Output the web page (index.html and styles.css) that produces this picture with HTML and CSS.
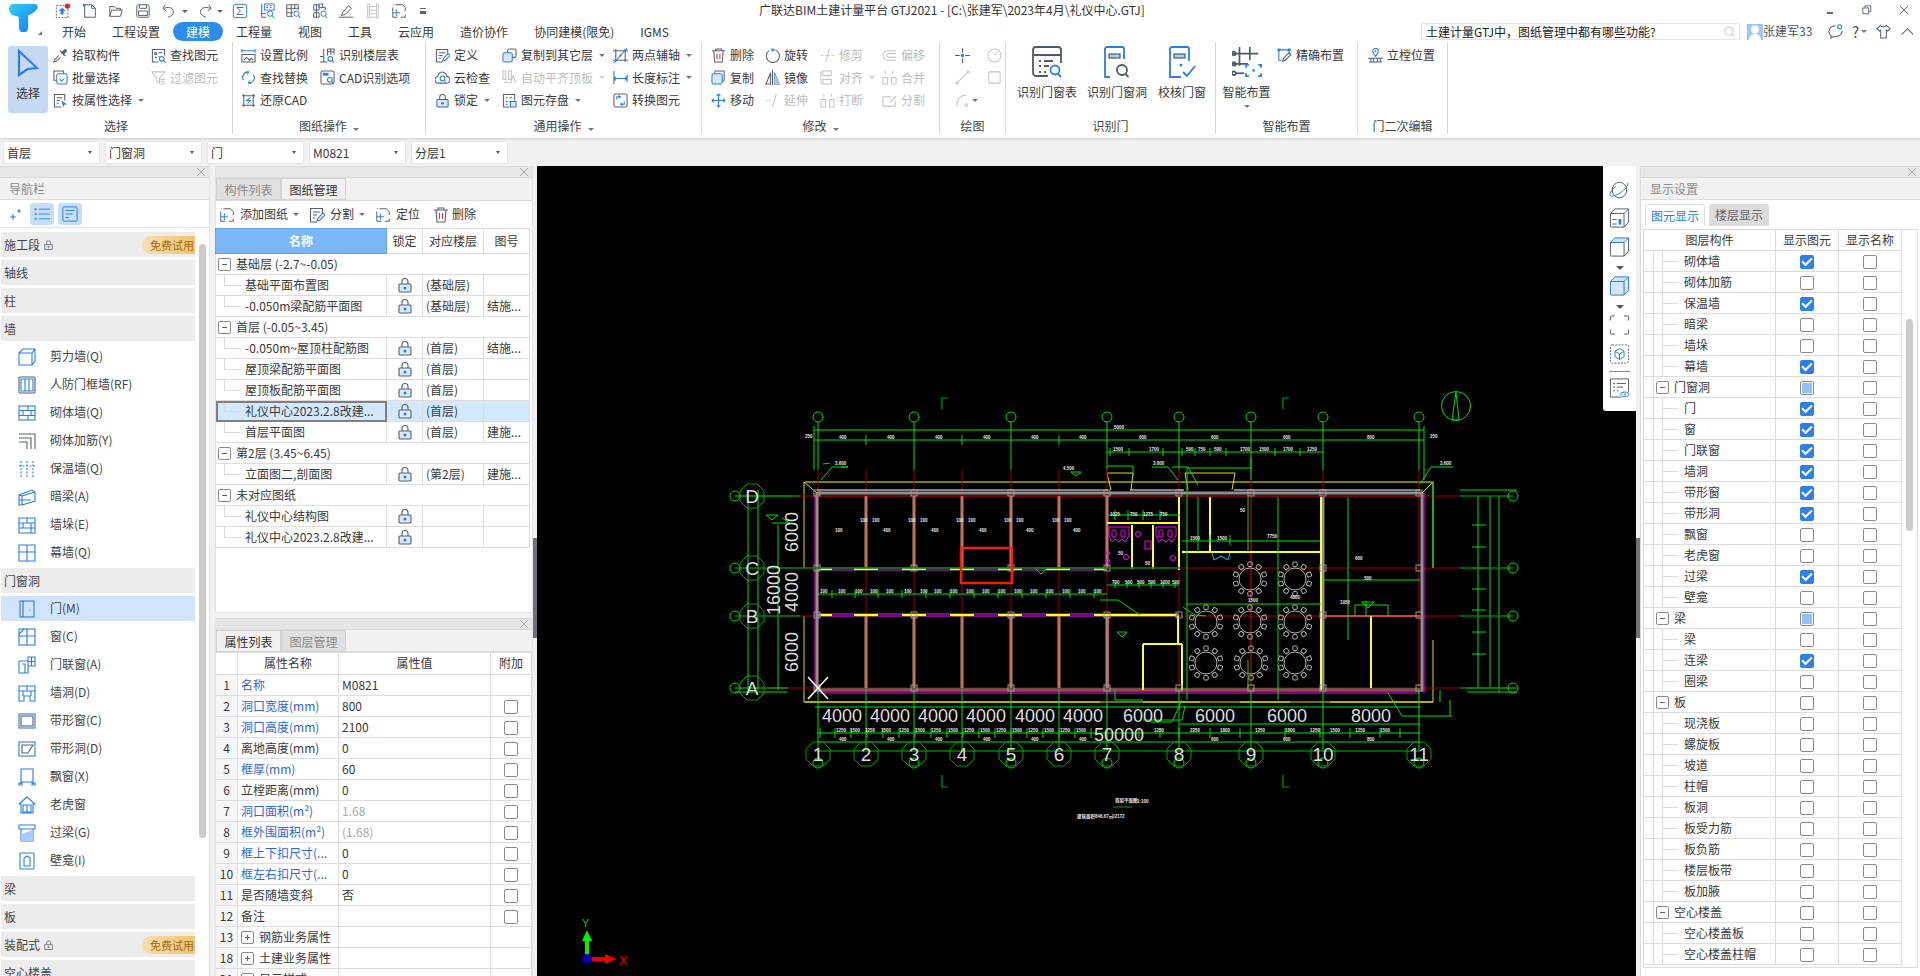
FILE: index.html
```html
<!DOCTYPE html>
<html lang="zh-CN">
<head>
<meta charset="utf-8">
<title>广联达BIM土建计量平台 GTJ2021</title>
<link rel="stylesheet" href="styles.css">
</head>
<body>
<svg class="defs" aria-hidden="true">
<defs>
<linearGradient id="tg" x1="0" y1="0" x2="1" y2="1"><stop offset="0" stop-color="#35d0f5"/><stop offset="1" stop-color="#0a78f0"/></linearGradient>
<symbol id="q-up" viewBox="0 0 18 18"><rect class="d dash" x="1.500" y="3" width="13" height="13.500"/><path class="bf" d="M8 5l4 4H9.700v4H6.300V9H4z"/><circle class="rf" cx="14" cy="3.500" r="3"/></symbol>
<symbol id="q-new" viewBox="0 0 18 18"><path class="d" d="M4 2h7l4 4v10H3V4"/><path class="d" d="M11 2v4h4"/><rect class="bf" x="1" y="1" width="3" height="3"/></symbol>
<symbol id="q-open" viewBox="0 0 18 18"><path class="d" d="M2 15V4h5l2 2h5v2M2 15l2-7h12l-2 7z"/></symbol>
<symbol id="q-save" viewBox="0 0 18 18"><rect class="d" x="2" y="2" width="14" height="14" rx="2"/><path class="d" d="M5 2v4h8V2M4 9h10v5H4z"/></symbol>
<symbol id="q-undo" viewBox="0 0 18 18"><path class="d" d="M5 2L2 6l4 3M3 6c5-2 11-1 11 4 0 3-3 5-6 6"/></symbol>
<symbol id="q-redo" viewBox="0 0 18 18"><path class="d" d="M13 2l3 4-4 3M15 6c-5-2-11-1-11 4 0 3 3 5 6 6"/></symbol>
<symbol id="q-sum" viewBox="0 0 18 18"><rect class="b" x="1.500" y="1.500" width="15" height="15" rx="2"/><path class="d" d="M12.500 5.500V5h-7l4 4-4 4h7v-.5"/></symbol>
<symbol id="q-calc" viewBox="0 0 18 18"><path class="d" d="M3 1v15h5M3 12h5"/><path class="b" d="M6 1h11v7H6zM8 3h2m2 0h2M8 5h2m2 0h2"/><circle class="b" cx="12.500" cy="12" r="3"/><path class="b" d="M14.500 14l2.500 3"/></symbol>
<symbol id="q-tbl" viewBox="0 0 18 18"><path class="d" d="M2 2h13v6M2 2v13h7M2 6h13M2 11h7M7 2v13M11 2v5"/><circle class="b" cx="13" cy="12" r="3"/><path class="b" d="M15 14l2 3"/></symbol>
<symbol id="q-tbl2" viewBox="0 0 18 18"><path class="d" d="M2 2h6v6H2zM2 11h6v5H2zM10 5h5v3M5 2v14"/><rect class="b" x="8" y="1" width="4" height="4"/><circle class="b" cx="13" cy="12" r="3"/><path class="b" d="M15 14l2 3"/></symbol>
<symbol id="q-pen" viewBox="0 0 18 18"><path class="d" d="M5 11l7-8 3 3-7 7-4 1zM1 16h16"/></symbol>
<symbol id="q-off" viewBox="0 0 18 18"><path class="g" d="M3 1h2v16H3zM13 1h2v16h-2zM5 4h8M5 8h8M5 12h8M5 16h8"/></symbol>
<symbol id="q-add" viewBox="0 0 18 18"><path class="d" d="M5 2h8l3 3v4M16 13v3h-5M7 16H2V5M2 2h1"/><path class="b" d="M6 7v8M2 11h8"/></symbol>

<symbol id="pick" viewBox="0 0 16 16"><path class="d" d="M6 8l-4.500 5-.5 2 2-.5L8 10"/><path class="df" d="M7 3.500l5.500 5.500 1-1-1.500-1.500 2.500-2.500c1-2-1-3.500-2.500-2.500L9.500 4 8 2.500z"/></symbol>
<symbol id="batch" viewBox="0 0 16 16"><path class="d" d="M11 4V1H1v10h3"/><rect class="b" x="4" y="4" width="11" height="11" rx="2"/><path class="b" d="M7 9l2 3 3-3"/></symbol>
<symbol id="attr" viewBox="0 0 16 16"><path class="d" d="M9 15H1.500V1.500h11V8M4 5h6M4 8h3M4 11h2"/><path class="bf" d="M9 8l6 4-3 .5-1 3z"/></symbol>
<symbol id="find" viewBox="0 0 16 16"><path class="d" d="M8 15H1.500V1.500h13V8M4 5h2v2H4zM8 5h4M4 10h2M8 9h1"/><circle class="b" cx="11.500" cy="11.500" r="2.500"/><path class="b" d="M13.500 13.500l2 2"/></symbol>
<symbol id="filter" viewBox="0 0 16 16"><path class="g" d="M1 2h14L9 9v5l-3-2V9zM10 10h5M10 12.500h5M10 15h5"/></symbol>
<symbol id="scale" viewBox="0 0 16 16"><path class="b" d="M1 1v4M15 1v4M1 3h14"/><path class="d" d="M1 7h14v8H1zM3 13l3-3 3 3 2-2 2 2"/></symbol>
<symbol id="replace" viewBox="0 0 16 16"><path class="b" d="M3 11C0 7 3 2 8 2M5 2L8 2 7 5M13 5c3 4 0 9-5 9M11 14l-3 0 1-3"/></symbol>
<symbol id="restore" viewBox="0 0 16 16"><path class="d" d="M3 1v14M13 1v14M1 3h14M1 13h14"/><path class="b" d="M10 5L6 8h4l-3 3"/></symbol>
<symbol id="floor" viewBox="0 0 16 16"><path class="d" d="M4 1v14M0 15h8M0 9h4M8 1h7v6M8 1v7M8 4h7M11.500 1v6"/><circle class="b" cx="11" cy="11.500" r="2.500"/><path class="b" d="M13 13.500l2 2"/></symbol>
<symbol id="cadopt" viewBox="0 0 16 16"><rect class="d" x="1" y="1" width="14" height="14" rx="2"/><path class="bf" d="M3 3h6v3H3z"/><circle class="b" cx="10.500" cy="10.500" r="2.500"/><path class="b" d="M12.500 12.500l2 2"/></symbol>
<symbol id="define" viewBox="0 0 16 16"><path class="d" d="M8 15H1.500V1.500h12V6M4 5h7M4 8h4M4 11h2"/><path class="b" d="M8 14l1-3 5-5 2 2-5 5z"/></symbol>
<symbol id="cloud" viewBox="0 0 16 16"><path class="d" d="M4 14a3.500 3.500 0 0 1-1-7C3 3 7 1 10 3c2 1 3 3 2.800 4a3.500 3.500 0 0 1-.8 7z"/><circle class="b" cx="8" cy="9" r="2.500"/><path class="b" d="M10 11l1.500 1.500"/></symbol>
<symbol id="lock" viewBox="0 0 16 16"><path class="d" d="M5 7V4.500a3 3 0 0 1 6 0V7"/><rect class="lk" x="2" y="7" width="12" height="8" rx="1"/><circle class="bf" cx="8" cy="11" r="1.500"/></symbol>
<symbol id="copyl" viewBox="0 0 16 16"><rect class="d" x="6" y="1" width="9" height="9" rx="2"/><rect class="bfl" x="1" y="5" width="10" height="10" rx="2"/></symbol>
<symbol id="flush" viewBox="0 0 16 16"><path class="g" d="M1 1h3v9H1zM7 1h3v9H7zM2 13h8M9 14l3-8 3 8"/></symbol>
<symbol id="store" viewBox="0 0 16 16"><path class="d" d="M8 15H1.500V1.500h12V8M4 5h2M8 5h3M4 9h2M8 9h2M4 12h2"/><path class="bfl" d="M9 9h6v6H9z"/></symbol>
<symbol id="axis2" viewBox="0 0 16 16"><path class="d" d="M3 1v14M13 1v14M0 3h16M0 13h16"/><path class="b" d="M1 16L15 0"/><circle class="bf" cx="8" cy="8" r="1.200"/></symbol>
<symbol id="dim" viewBox="0 0 16 16"><path class="d" d="M1 1v14"/><path class="b" d="M1 9h14M15 5v8M3 7l-2 2 2 2M13 7l2 2-2 2"/></symbol>
<symbol id="conv" viewBox="0 0 16 16"><rect class="d" x="1" y="1" width="14" height="14" rx="2"/><path class="b" d="M4 7V4h4M6 2.500L8 4 6 5.500M12 9v3H8M10 10.500L8 12l2 1.500"/></symbol>
<symbol id="del" viewBox="0 0 16 16"><path class="d" d="M1 3h14M5 3V1h6v2M3 3l1 12h8l1-12"/><path class="rs" d="M6.500 6v6M9.500 6v6"/></symbol>
<symbol id="rot" viewBox="0 0 16 16"><path class="d" d="M4 3a7 7 0 1 0 7-1"/><path class="bf" d="M7 0l4 2-4 2z"/></symbol>
<symbol id="copy" viewBox="0 0 16 16"><path class="d" d="M4 4V2a1 1 0 0 1 1-1h9v10a1 1 0 0 1-1 1h-1"/><rect class="bfl" x="1" y="4" width="11" height="11" rx="2"/></symbol>
<symbol id="mir" viewBox="0 0 16 16"><path class="d" d="M8 0v16M6 3L1 15h5zM10 3v12h5z"/><path class="bfa" d="M10 3v12h5z"/></symbol>
<symbol id="move" viewBox="0 0 16 16"><path class="b" d="M8 1v14M1 8h14M6 3l2-2 2 2M6 13l2 2 2-2M3 6L1 8l2 2M13 6l2 2-2 2"/></symbol>
<symbol id="trim" viewBox="0 0 16 16"><path class="g" d="M10 1L6 15M1 8h2M5 8h2M9 8h2M13 8h2"/></symbol>
<symbol id="ext" viewBox="0 0 16 16"><path class="g" d="M12 1L8 15M1 8h2M4 8h2"/></symbol>
<symbol id="align" viewBox="0 0 16 16"><path class="g" d="M3 1h9v5H3zM3 10h9v5H3zM1 1v14"/></symbol>
<symbol id="merge" viewBox="0 0 16 16"><path class="g" d="M3 1l1 3M12 1l-1 3M1 8h5v7H1zM10 8h5v7h-5z"/></symbol>
<symbol id="brk" viewBox="0 0 16 16"><path class="g" d="M4 1v3M12 1v3M1 7h5v8H1zM10 7h5v8h-5z"/></symbol>
<symbol id="off" viewBox="0 0 16 16"><path class="g" d="M15 3H6a5 5 0 0 0 0 10h9M15 6H7a2 2 0 0 0 0 4h8"/></symbol>
<symbol id="spl" viewBox="0 0 16 16"><path class="g" d="M10 4H1v10h13V8M9 10l6-7"/></symbol>
<symbol id="pt" viewBox="0 0 16 16"><path class="d" d="M8 0v5M8 11v5M0 8h5M11 8h5"/><circle class="bf" cx="8" cy="8" r="1.800"/></symbol>
<symbol id="circ" viewBox="0 0 16 16"><circle class="g" cx="8" cy="8" r="7"/><path class="g" d="M8 8l3-4"/></symbol>
<symbol id="line" viewBox="0 0 16 16"><path class="g" d="M2 14L14 2"/><circle class="g" cx="2" cy="14" r="1"/><circle class="g" cx="14" cy="2" r="1"/></symbol>
<symbol id="rect" viewBox="0 0 16 16"><rect class="g" x="2" y="2" width="12" height="12" rx="1"/></symbol>
<symbol id="arc" viewBox="0 0 16 16"><path class="g" d="M2 14C2 6 7 2 12 2"/><circle class="g" cx="12" cy="13" r="1.500"/></symbol>
<symbol id="pos" viewBox="0 0 16 16"><path class="b" d="M8 9C6 6.500 5 5 5 3.500a3 3 0 0 1 6 0C11 5 10 6.500 8 9z"/><circle class="bf" cx="8" cy="3.500" r="1"/><path class="d" d="M0 11h16M1 15h14M3 11v4M6 11v4M10 11v4M13 11v4"/></symbol>
<symbol id="prec" viewBox="0 0 16 16"><path class="b" d="M2 2h11v5M2 2v11h3M1 1h2v2H1zM12 1h2v2h-2z"/><path class="d" d="M6 14l1-3 6-6 2 2-6 6z"/></symbol>
<symbol id="big-tbl" viewBox="0 0 30 32"><path class="dl" d="M16 30H4a3 3 0 0 1-3-3V4a3 3 0 0 1 3-3h22a3 3 0 0 1 3 3v13M1 9h28M7 15h2M12 15h9M7 20h2M12 20h5M7 26h2M12 26h2"/><circle class="bl" cx="23" cy="24" r="4.500"/><path class="bl" d="M26 28l3 3"/></symbol>
<symbol id="big-door" viewBox="0 0 30 32"><path class="bl" d="M8 31H3V3a2 2 0 0 1 2-2h15a2 2 0 0 1 2 2v10"/><rect class="dlf" x="7" y="8" width="11" height="4"/><circle class="dlc" cx="20" cy="24" r="5"/><path class="dl" d="M23.500 28l3 3"/></symbol>
<symbol id="big-chk" viewBox="0 0 30 32"><path class="bl" d="M14 31H3V3a2 2 0 0 1 2-2h15a2 2 0 0 1 2 2v12"/><rect class="dlf" x="7" y="8" width="11" height="4"/><circle class="bf" cx="14" cy="19" r="1.500"/><path class="bl" d="M16 26l4 4 8-10"/></symbol>
<symbol id="big-smart" viewBox="0 0 32 32"><path class="dl" d="M8 0v20M19 0v14M0 7h28M0 18h17"/><circle class="dlc" cx="2" cy="7" r="2"/><circle class="dlc" cx="2" cy="18" r="2"/><circle class="dlc" cx="2" cy="28" r="2"/><path class="dl" d="M4 28h9"/><path class="bl" d="M18 19h-3v3M28 19h3v3M18 31h-3v-3M28 31h3v-3"/><circle class="bf" cx="23" cy="25" r="1.400"/></symbol>

<symbol id="n-star" viewBox="0 0 16 16"><path class="b" d="M5 8v6M2 11h6"/><path class="b" d="M11 3v4M9 5h4"/></symbol>
<symbol id="n-list" viewBox="0 0 20 18"><circle class="b" cx="2" cy="3" r="1"/><circle class="b" cx="2" cy="9" r="1"/><circle class="b" cx="2" cy="15" r="1"/><path class="b" d="M6 3h14M6 9h14M6 15h14"/></symbol>
<symbol id="n-form" viewBox="0 0 18 18"><rect class="b" x="1" y="1" width="16" height="16" rx="1"/><path class="b" d="M4 5h10M4 9h8M4 13h4"/></symbol>
<symbol id="w-cut" viewBox="0 0 18 18"><path class="b" d="M1 5h13v12H1zM1 5l4-4h12v12l-3 4M14 5l3-4"/></symbol>
<symbol id="w-rf" viewBox="0 0 18 18"><rect class="d" x="1" y="1" width="16" height="16" rx="1"/><path class="b" d="M3 3h12v12H3zM7 3v12M11 3v12"/></symbol>
<symbol id="w-brk" viewBox="0 0 18 18"><rect class="b" x="1" y="2" width="16" height="14"/><path class="b" d="M1 6.500h16M1 11.500h16M10 2v4.500M5 6.500v5M13 6.500v5M10 11.500V16"/></symbol>
<symbol id="w-reb" viewBox="0 0 18 18"><path class="d" d="M1 2h16v15M1 6h12v11M1 10h8v7"/></symbol>
<symbol id="w-ins" viewBox="0 0 18 18"><path class="d db" d="M3 1v16M9 1v16M15 1v16M1 6h16"/></symbol>
<symbol id="w-dark" viewBox="0 0 18 18"><path class="b" d="M1 7l13-5 3 2v9L4 17H1zM1 7l3 1v9M4 8l13-4M1 12h12"/></symbol>
<symbol id="w-dj" viewBox="0 0 18 18"><path class="b" d="M1 2h16v15H1zM1 7h16M1 12h16M9 2v5M5 7v5M13 7v10"/></symbol>
<symbol id="w-mq" viewBox="0 0 18 18"><path class="b" d="M1 1h16v16H1zM9 1v16M1 8h16"/></symbol>
<symbol id="d-door" viewBox="0 0 18 18"><rect class="b" x="2" y="1" width="14" height="16"/><path class="d" d="M5 1v16"/><circle class="bf" cx="12" cy="10" r=".6"/></symbol>
<symbol id="d-win" viewBox="0 0 18 18"><rect class="b" x="1" y="1" width="16" height="16"/><path class="b" d="M9 1v16M1 8h16M1 6l5-5"/></symbol>
<symbol id="d-mlc" viewBox="0 0 18 18"><path class="b" d="M1 5h9v12H1zM4 8h3v9M10 1h7v9h-7zM13.500 1v9M10 5.500h7"/></symbol>
<symbol id="d-qd" viewBox="0 0 18 18"><path class="b" d="M1 2h16v15h-5v-5H6v5H1zM1 7h16M9 2v5M5 7v5M13 7v5"/></symbol>
<symbol id="d-dxc" viewBox="0 0 18 18"><rect class="b" x="1" y="2" width="16" height="14"/><rect class="d" x="3" y="4" width="12" height="10"/></symbol>
<symbol id="d-dxd" viewBox="0 0 18 18"><rect class="b" x="1" y="2" width="16" height="14"/><path class="d" d="M4 13h6l5-8H4z"/></symbol>
<symbol id="d-pc" viewBox="0 0 18 18"><path class="b" d="M3 16V1h12v15M1 15h3v2H1zM14 15h3v2h-3zM3 14h12"/></symbol>
<symbol id="d-lh" viewBox="0 0 18 18"><path class="b" d="M9 1L1 8h2v9h12V8h2zM5 9h8v7H5zM9 9v7"/></symbol>
<symbol id="d-gl" viewBox="0 0 18 18"><path class="b" d="M1 1h16v4H1zM3 5v12h12V5"/><path class="bfa" d="M3 10l12-4v11H3z"/></symbol>
<symbol id="d-bk" viewBox="0 0 18 18"><rect class="b" x="2" y="1" width="14" height="16" rx="1"/><path class="b" d="M6 14V6l3-2 3 2v8z"/></symbol>
<symbol id="lk-s" viewBox="0 0 16 16"><path class="d" d="M5 7V5a3 3 0 0 1 6 0v2M2.500 7.500h11v7h-11z"/><circle class="d" cx="8" cy="11" r="1"/></symbol>

<symbol id="t-orb" viewBox="0 0 22 22"><ellipse class="d" cx="11" cy="11" rx="8" ry="8.500"/><path class="b" d="M20 3c1 3-3 8-8 11S2 19 1 17c-1-3 2-7 6-10"/></symbol>
<symbol id="t-3d" viewBox="0 0 22 22"><path class="d" d="M1 6h15v15H2a1 1 0 0 1-1-1zM1 6l5-5h15v15l-5 5M16 6l5-5"/><path class="bf" d="M3 12h5v1.200H3zM3 17h5v1.200H3zM10 12h3v6.200h-3z"/></symbol>
<symbol id="t-cube" viewBox="0 0 22 22"><path class="d" d="M1 6h15v15H2a1 1 0 0 1-1-1zM16 21l5-5V1"/><path class="bfl" d="M1 6l5-5h15l-5 5z"/></symbol>
<symbol id="t-cube2" viewBox="0 0 22 22"><path class="bfl" d="M1 6h15v15H2a1 1 0 0 1-1-1zM1 6l5-5h15v15l-5 5M16 6l5-5"/></symbol>
<symbol id="t-frame" viewBox="0 0 22 22"><path class="d" d="M1 6V2a1 1 0 0 1 1-1h4M16 1h4a1 1 0 0 1 1 1v4M1 16v4a1 1 0 0 0 1 1h4M16 21h4a1 1 0 0 0 1-1v-4"/></symbol>
<symbol id="t-box" viewBox="0 0 22 22"><rect class="d dash" x="1" y="1" width="20" height="20" rx="2"/><path class="b" d="M11 5l5 3v6l-5 3-5-3V8zM6 8l5 3 5-3M11 11v6"/></symbol>
<symbol id="t-set" viewBox="0 0 22 22"><path class="d" d="M13 21H1V1h20v14M4 6h2M8 6h10M4 10h2M8 10h7M4 14h2M8 14h2"/><ellipse class="b" cx="17" cy="18" rx="4.500" ry="2.500"/><circle class="bf" cx="17" cy="18" r="1"/></symbol>

<g id="oct"><polygon points="-5,-12 5,-12 12,-5 12,5 5,12 -5,12 -12,5 -12,-5"/></g>
<g id="tb"><circle r="11"/><rect x="-2.200" y="-17" width="4.400" height="4.400" rx="1"/><rect x="-2.200" y="-17" width="4.400" height="4.400" rx="1" transform="rotate(36)"/><rect x="-2.200" y="-17" width="4.400" height="4.400" rx="1" transform="rotate(72)"/><rect x="-2.200" y="-17" width="4.400" height="4.400" rx="1" transform="rotate(108)"/><rect x="-2.200" y="-17" width="4.400" height="4.400" rx="1" transform="rotate(144)"/><rect x="-2.200" y="-17" width="4.400" height="4.400" rx="1" transform="rotate(180)"/><rect x="-2.200" y="-17" width="4.400" height="4.400" rx="1" transform="rotate(216)"/><rect x="-2.200" y="-17" width="4.400" height="4.400" rx="1" transform="rotate(252)"/><rect x="-2.200" y="-17" width="4.400" height="4.400" rx="1" transform="rotate(288)"/><rect x="-2.200" y="-17" width="4.400" height="4.400" rx="1" transform="rotate(324)"/></g>
<g id="wc"><path d="M1 0h20v9l-4 6-3-3-3 3-4-3-3 3-3-6z"/><rect x="4" y="3" width="4" height="7" rx="1"/><rect x="13" y="3" width="4" height="7" rx="1"/></g>
</defs>
</svg>

<div class="app">
  <header class="head">
    <div class="logo">
      <svg class="logo-t" viewBox="0 0 29 28"><path class="logo-p" d="M4 0H26a3 3 0 0 1 2 5c-2 3-5 5-8 6-1 0-1 1-1 2v11a4.500 4.500 0 0 1-9 0V15c0-2-1-3-3-3C3 12 0 8 0 5c0-3 2-5 4-5z"/></svg>
      <span class="logo-c"></span>
    </div>
    <div class="head-main">
      <div class="quick">
        <div class="q-icons">
          <svg class="qi"><use href="#q-up"/></svg>
          <svg class="qi"><use href="#q-new"/></svg>
          <svg class="qi"><use href="#q-open"/></svg>
          <svg class="qi"><use href="#q-save"/></svg>
          <svg class="qi"><use href="#q-undo"/></svg><span class="car q-car"></span>
          <svg class="qi"><use href="#q-redo"/></svg><span class="car q-car"></span>
          <svg class="qi"><use href="#q-sum"/></svg>
          <svg class="qi"><use href="#q-calc"/></svg>
          <svg class="qi"><use href="#q-tbl"/></svg>
          <svg class="qi"><use href="#q-tbl2"/></svg>
          <svg class="qi"><use href="#q-pen"/></svg>
          <svg class="qi"><use href="#q-off"/></svg>
          <svg class="qi"><use href="#q-add"/></svg>
          <span class="q-more"></span>
        </div>
        <div class="app-title">广联达BIM土建计量平台 GTJ2021 - [C:\张建军\2023年4月\礼仪中心.GTJ]</div>
        <div class="win">
          <span class="w-min"></span>
          <svg class="w-ic" viewBox="0 0 12 12"><path class="d" d="M3.500 3V1h7v7H8.500M1 3.500h7v7H1z"/></svg>
          <svg class="w-ic" viewBox="0 0 12 12"><path class="d" d="M1 1l10 10M11 1L1 11"/></svg>
        </div>
      </div>
      <div class="tabsrow">
        <nav class="tabs">
          <span class="tab">开始</span><span class="tab">工程设置</span><span class="tab tab-on">建模</span><span class="tab">工程量</span><span class="tab">视图</span><span class="tab">工具</span><span class="tab">云应用</span><span class="tab">造价协作</span><span class="tab">协同建模(限免)</span><span class="tab">IGMS</span>
        </nav>
        <div class="search"><span class="search-tx">土建计量GTJ中，图纸管理中都有哪些功能?</span><svg class="search-ic" viewBox="0 0 12 12"><circle class="g" cx="5.500" cy="5.500" r="4.500"/><path class="g" d="M9 9l2 2"/></svg></div>
        <div class="user"><svg class="avatar" viewBox="0 0 16 16"><rect class="av-b" width="16" height="16"/><circle class="av-w" cx="8" cy="5.500" r="4"/><path class="av-w" d="M2 16c0-4 3-6 6-6s6 2 6 6z"/></svg><span>张建军33</span></div>
        <div class="head-tools">
          <svg class="ht" viewBox="0 0 16 16"><path class="d" d="M8 2C4 2 1 4.500 1 8c0 2 1 3.500 2.500 4.500L3 15l3-1.500c3.500.5 9-1 9-6"/><circle class="b" cx="12.500" cy="3" r="2.200"/><path class="d" d="M5 8h.1M8 8h.1M11 8h.1"/></svg>
          <span class="help">?</span><span class="car help-car"></span>
          <svg class="ht" viewBox="0 0 16 16"><path class="d" d="M5 1.500L1 5l2.500 2.500L5 6.500V15h6V6.500l1.500 1L15 5l-4-3.500c-1 2-5 2-6 0z"/></svg>
          <svg class="ht" viewBox="0 0 16 16"><path class="d" d="M2 11l6-6 6 6"/></svg>
        </div>
      </div>
    </div>
  </header>

  <section class="ribbon">
    <div class="grp g1">
      <div class="rb">
        <div class="sel-big"><svg class="sel-ar" viewBox="0 0 22 28"><path class="sel-p" d="M2 2l18 17-9.500 1L2 26z"/></svg><span>选择</span></div>
        <div class="col c-98">
          <div class="it"><svg><use href="#pick"/></svg>拾取构件</div>
          <div class="it"><svg><use href="#batch"/></svg>批量选择</div>
          <div class="it"><svg><use href="#attr"/></svg>按属性选择<span class="car"></span></div>
        </div>
        <div class="col">
          <div class="it"><svg><use href="#find"/></svg>查找图元</div>
          <div class="it dis"><svg><use href="#filter"/></svg>过滤图元</div>
        </div>
      </div>
      <div class="glabel">选择</div>
    </div>
    <div class="grp g2">
      <div class="rb">
        <div class="col c-79">
          <div class="it"><svg><use href="#scale"/></svg>设置比例</div>
          <div class="it"><svg><use href="#replace"/></svg>查找替换</div>
          <div class="it"><svg><use href="#restore"/></svg>还原CAD</div>
        </div>
        <div class="col">
          <div class="it"><svg><use href="#floor"/></svg>识别楼层表</div>
          <div class="it"><svg><use href="#cadopt"/></svg>CAD识别选项</div>
        </div>
      </div>
      <div class="glabel">图纸操作<span class="car"></span></div>
    </div>
    <div class="grp g3">
      <div class="rb">
        <div class="col c-67">
          <div class="it"><svg><use href="#define"/></svg>定义</div>
          <div class="it"><svg><use href="#cloud"/></svg>云检查</div>
          <div class="it"><svg><use href="#lock"/></svg>锁定<span class="car"></span></div>
        </div>
        <div class="col c-111">
          <div class="it"><svg><use href="#copyl"/></svg>复制到其它层<span class="car"></span></div>
          <div class="it dis"><svg><use href="#flush"/></svg>自动平齐顶板<span class="car"></span></div>
          <div class="it"><svg><use href="#store"/></svg>图元存盘<span class="car"></span></div>
        </div>
        <div class="col">
          <div class="it"><svg><use href="#axis2"/></svg>两点辅轴<span class="car"></span></div>
          <div class="it"><svg><use href="#dim"/></svg>长度标注<span class="car"></span></div>
          <div class="it"><svg><use href="#conv"/></svg>转换图元</div>
        </div>
      </div>
      <div class="glabel">通用操作<span class="car"></span></div>
    </div>
    <div class="grp g4">
      <div class="rb">
        <div class="col c-54">
          <div class="it"><svg><use href="#del"/></svg>删除</div>
          <div class="it"><svg><use href="#copy"/></svg>复制</div>
          <div class="it"><svg><use href="#move"/></svg>移动</div>
        </div>
        <div class="col c-55">
          <div class="it"><svg><use href="#rot"/></svg>旋转</div>
          <div class="it"><svg><use href="#mir"/></svg>镜像</div>
          <div class="it dis"><svg><use href="#ext"/></svg>延伸</div>
        </div>
        <div class="col c-62">
          <div class="it dis"><svg><use href="#trim"/></svg>修剪</div>
          <div class="it dis"><svg><use href="#align"/></svg>对齐<span class="car"></span></div>
          <div class="it dis"><svg><use href="#brk"/></svg>打断</div>
        </div>
        <div class="col">
          <div class="it dis"><svg><use href="#off"/></svg>偏移</div>
          <div class="it dis"><svg><use href="#merge"/></svg>合并</div>
          <div class="it dis"><svg><use href="#spl"/></svg>分割</div>
        </div>
      </div>
      <div class="glabel">修改<span class="car"></span></div>
    </div>
    <div class="grp g5">
      <div class="rb">
        <div class="col c-32">
          <div class="it"><svg><use href="#pt"/></svg></div>
          <div class="it"><svg><use href="#line"/></svg></div>
          <div class="it"><svg><use href="#arc"/></svg><span class="car car-n"></span></div>
        </div>
        <div class="col">
          <div class="it"><svg><use href="#circ"/></svg></div>
          <div class="it"><svg><use href="#rect"/></svg></div>
        </div>
      </div>
      <div class="glabel">绘图</div>
    </div>
    <div class="grp g6">
      <div class="rb">
        <div class="lg w-70"><svg><use href="#big-tbl"/></svg><span>识别门窗表</span></div>
        <div class="lg w-70"><svg><use href="#big-door"/></svg><span>识别门窗洞</span></div>
        <div class="lg w-60"><svg><use href="#big-chk"/></svg><span>校核门窗</span></div>
      </div>
      <div class="glabel">识别门</div>
    </div>
    <div class="grp g7">
      <div class="rb">
        <div class="lg w-61"><svg><use href="#big-smart"/></svg><span>智能布置</span><span class="car lg-car"></span></div>
        <div class="col">
          <div class="it"><svg><use href="#prec"/></svg>精确布置</div>
        </div>
      </div>
      <div class="glabel">智能布置</div>
    </div>
    <div class="grp g8">
      <div class="rb">
        <div class="col">
          <div class="it"><svg><use href="#pos"/></svg>立樘位置</div>
        </div>
      </div>
      <div class="glabel">门二次编辑</div>
    </div>
  </section>

  <div class="ddbar">
    <div class="dd">首层<span class="car"></span></div>
    <div class="dd">门窗洞<span class="car"></span></div>
    <div class="dd">门<span class="car"></span></div>
    <div class="dd">M0821<span class="car"></span></div>
    <div class="dd">分层1<span class="car"></span></div>
  </div>

  <main class="work">
    <aside class="nav">
      <div class="strip"><span class="strip-x"></span></div>
      <div class="ptitle">导航栏</div>
      <div class="nav-tools">
        <svg class="nt"><use href="#n-star"/></svg>
        <span class="nt-on"><svg class="nt"><use href="#n-list"/></svg></span>
        <span class="nt-on"><svg class="nt"><use href="#n-form"/></svg></span>
      </div>
      <div class="nav-body">
        <div class="nav-list">
          <div class="sec">施工段 <svg class="sec-lk"><use href="#lk-s"/></svg><span class="badge">免费试用</span></div>
          <div class="sec">轴线</div>
          <div class="sec">柱</div>
          <div class="sec">墙</div>
          <div class="ni"><svg><use href="#w-cut"/></svg>剪力墙(Q)</div>
          <div class="ni"><svg><use href="#w-rf"/></svg>人防门框墙(RF)</div>
          <div class="ni"><svg><use href="#w-brk"/></svg>砌体墙(Q)</div>
          <div class="ni"><svg><use href="#w-reb"/></svg>砌体加筋(Y)</div>
          <div class="ni"><svg><use href="#w-ins"/></svg>保温墙(Q)</div>
          <div class="ni"><svg><use href="#w-dark"/></svg>暗梁(A)</div>
          <div class="ni"><svg><use href="#w-dj"/></svg>墙垛(E)</div>
          <div class="ni"><svg><use href="#w-mq"/></svg>幕墙(Q)</div>
          <div class="sec">门窗洞</div>
          <div class="ni ni-on"><svg><use href="#d-door"/></svg>门(M)</div>
          <div class="ni"><svg><use href="#d-win"/></svg>窗(C)</div>
          <div class="ni"><svg><use href="#d-mlc"/></svg>门联窗(A)</div>
          <div class="ni"><svg><use href="#d-qd"/></svg>墙洞(D)</div>
          <div class="ni"><svg><use href="#d-dxc"/></svg>带形窗(C)</div>
          <div class="ni"><svg><use href="#d-dxd"/></svg>带形洞(D)</div>
          <div class="ni"><svg><use href="#d-pc"/></svg>飘窗(X)</div>
          <div class="ni"><svg><use href="#d-lh"/></svg>老虎窗</div>
          <div class="ni"><svg><use href="#d-gl"/></svg>过梁(G)</div>
          <div class="ni"><svg><use href="#d-bk"/></svg>壁龛(I)</div>
          <div class="sec">梁</div>
          <div class="sec">板</div>
          <div class="sec">装配式 <svg class="sec-lk"><use href="#lk-s"/></svg><span class="badge">免费试用</span></div>
          <div class="sec">空心楼盖</div>
        </div>
        <div class="vscroll nav-thumb"></div>
      </div>
    </aside>

    <section class="mid">
      <div class="mid-top">
        <div class="strip"><span class="strip-x"></span></div>
        <div class="ptabs"><span class="ptab">构件列表</span><span class="ptab ptab-on">图纸管理</span></div>
        <div class="mtools">
          <svg><use href="#q-add"/></svg><span>添加图纸</span><span class="car"></span>
          <svg class="m-gap"><use href="#define"/></svg><span>分割</span><span class="car"></span>
          <svg class="m-gap"><use href="#q-add"/></svg><span>定位</span>
          <svg class="m-gap2"><use href="#del"/></svg><span>删除</span>
        </div>
        <table class="tb draw">
          <colgroup><col class="dc1"><col class="dc2"><col class="dc3"><col class="dc4"></colgroup>
          <thead><tr><th class="th-blue">名称</th><th>锁定</th><th>对应楼层</th><th>图号</th></tr></thead>
          <tbody>
            <tr><td class="grp-td" colspan="4"><span class="tog"></span>基础层 (-2.7~-0.05)</td></tr>
            <tr><td class="leaf">基础平面布置图</td><td class="ctr"><svg class="lk16"><use href="#lock"/></svg></td><td>(基础层)</td><td></td></tr>
            <tr><td class="leaf">-0.050m梁配筋平面图</td><td class="ctr"><svg class="lk16"><use href="#lock"/></svg></td><td>(基础层)</td><td>结施...</td></tr>
            <tr><td class="grp-td" colspan="4"><span class="tog"></span>首层 (-0.05~3.45)</td></tr>
            <tr><td class="leaf">-0.050m~屋顶柱配筋图</td><td class="ctr"><svg class="lk16"><use href="#lock"/></svg></td><td>(首层)</td><td>结施...</td></tr>
            <tr><td class="leaf">屋顶梁配筋平面图</td><td class="ctr"><svg class="lk16"><use href="#lock"/></svg></td><td>(首层)</td><td></td></tr>
            <tr><td class="leaf">屋顶板配筋平面图</td><td class="ctr"><svg class="lk16"><use href="#lock"/></svg></td><td>(首层)</td><td></td></tr>
            <tr class="row-on"><td class="leaf cell-on">礼仪中心2023.2.8改建...</td><td class="ctr"><svg class="lk16"><use href="#lock"/></svg></td><td>(首层)</td><td></td></tr>
            <tr><td class="leaf">首层平面图</td><td class="ctr"><svg class="lk16"><use href="#lock"/></svg></td><td>(首层)</td><td>建施...</td></tr>
            <tr><td class="grp-td" colspan="4"><span class="tog"></span>第2层 (3.45~6.45)</td></tr>
            <tr><td class="leaf">立面图二,剖面图</td><td class="ctr"><svg class="lk16"><use href="#lock"/></svg></td><td>(第2层)</td><td>建施...</td></tr>
            <tr><td class="grp-td" colspan="4"><span class="tog"></span>未对应图纸</td></tr>
            <tr><td class="leaf">礼仪中心结构图</td><td class="ctr"><svg class="lk16"><use href="#lock"/></svg></td><td></td><td></td></tr>
            <tr><td class="leaf">礼仪中心2023.2.8改建...</td><td class="ctr"><svg class="lk16"><use href="#lock"/></svg></td><td></td><td></td></tr>
          </tbody>
        </table>
      </div>
      <div class="mid-bot">
        <div class="strip"><span class="strip-x"></span></div>
        <div class="ptabs ptabs-b"><span class="ptab ptab-on">属性列表</span><span class="ptab">图层管理</span></div>
        <table class="tb prop">
          <colgroup><col class="pc1"><col class="pc2"><col class="pc3"><col class="pc4"></colgroup>
          <thead><tr><th></th><th>属性名称</th><th>属性值</th><th>附加</th></tr></thead>
          <tbody>
            <tr><td class="idx">1</td><td class="bl">名称</td><td>M0821</td><td></td></tr>
            <tr><td class="idx">2</td><td class="bl">洞口宽度(mm)</td><td>800</td><td class="ctr"><i class="cb"></i></td></tr>
            <tr><td class="idx">3</td><td class="bl">洞口高度(mm)</td><td>2100</td><td class="ctr"><i class="cb"></i></td></tr>
            <tr><td class="idx">4</td><td>离地高度(mm)</td><td>0</td><td class="ctr"><i class="cb"></i></td></tr>
            <tr><td class="idx">5</td><td class="bl">框厚(mm)</td><td>60</td><td class="ctr"><i class="cb"></i></td></tr>
            <tr><td class="idx">6</td><td>立樘距离(mm)</td><td>0</td><td class="ctr"><i class="cb"></i></td></tr>
            <tr><td class="idx">7</td><td class="bl">洞口面积(m²)</td><td class="gray">1.68</td><td class="ctr"><i class="cb"></i></td></tr>
            <tr><td class="idx">8</td><td class="bl">框外围面积(m²)</td><td class="gray">(1.68)</td><td class="ctr"><i class="cb"></i></td></tr>
            <tr><td class="idx">9</td><td class="bl">框上下扣尺寸(...</td><td>0</td><td class="ctr"><i class="cb"></i></td></tr>
            <tr><td class="idx">10</td><td class="bl">框左右扣尺寸(...</td><td>0</td><td class="ctr"><i class="cb"></i></td></tr>
            <tr><td class="idx">11</td><td>是否随墙变斜</td><td>否</td><td class="ctr"><i class="cb"></i></td></tr>
            <tr><td class="idx">12</td><td>备注</td><td></td><td class="ctr"><i class="cb"></i></td></tr>
            <tr><td class="idx">13</td><td><span class="tog tog-p"></span>钢筋业务属性</td><td></td><td></td></tr>
            <tr><td class="idx">18</td><td><span class="tog tog-p"></span>土建业务属性</td><td></td><td></td></tr>
            <tr><td class="idx">21</td><td><span class="tog tog-p"></span>显示样式</td><td></td><td></td></tr>
          </tbody>
        </table>
      </div>
    </section>

    <div class="handle"><span class="grip"></span></div>

    <section class="canvas">
      <svg class="cad" viewBox="537 166 1099 810" xmlns="http://www.w3.org/2000/svg">
        <!-- outlines -->
        <g class="ol"><path d="M805 482H1433M805 702H1100M1143 702H1200M1240 702H1290M1330 702H1433"/></g>
        <g class="yl"><path d="M804 482V568M804 616V702H1433V640M1433 482V568M804 482L817 493M1433 482L1422 493"/></g>
        <g class="yl"><path d="M1107 473H1133L1131 490M1107 473L1111 490M1185 473H1235L1232 490M1185 473L1188 490"/></g>
        <g class="dr"><path d="M818 470V690M866 470V690M914 470V690M962 470V690M1011 470V690M1059 470V690M1107 470V690M1179 470V690M1251 470V690M1323 470V690M1419 470V690M772 496H1460M1180 568H1460M772 568H1180M772 616H1460M770 688H1470"/></g>
        <!-- walls -->
        <g class="wall"><path d="M817 493H1422M817 493V690H1422V493M866 496V568M914 496V568M962 496V568M1011 496V568M1059 496V568M1107 496V568M866 616V688M914 616V688M962 616V688M1011 616V688M1059 616V688M1107 616V688M818 569H1107M818 615H1179M1323 497V690"/></g>
        <g class="dr"><path d="M817 496H1422M817 690H1422M1251 496V690"/></g>
        <g class="org"><path d="M866 496V568M914 496V568M962 496V568M1011 496V568M1059 496V568M1107 496V568M866 616V688M914 616V688M962 616V688M1011 616V688M1059 616V688M1108 616V688M1323 616H1420"/></g>
        <g class="pur"><path d="M832 569H854M878 569H902M926 569H950M974 569H998M1022 569H1046M1070 569H1094M832 615H854M878 615H902M926 615H950M974 615H998M1022 615H1046M1070 615H1094"/></g>
        <g class="ywall"><path d="M821 569H832M854 569H878M902 569H926M950 569H974M998 569H1022M1046 569H1070M1094 569H1104M821 615H832M854 615H878M902 615H926M950 615H974M998 615H1022M1046 615H1070M1094 615H1176M1179 497V570M1107 523H1179M1132 525V569M1153 525V569M1210 497V552M1182 552H1321M1321 497V690M1371 616V688M1143 644H1182M1143 644V690M1182 644V690M1178 616V644"/></g>
        <g class="mg"><path d="M815 493V693M817 693H1420M1424 493V693"/></g>
        <g class="wh1"><path d="M817 490H1108M1130 490H1184M1234 490H1420"/></g>
        <g class="mgt"><use href="#wc" x="1108" y="527"/><use href="#wc" x="1155" y="527"/><circle cx="1126" cy="557" r="2.500"/><circle cx="1173" cy="558" r="2.500"/><circle cx="1108" cy="553" r="1.800"/><circle cx="1108" cy="561" r="1.800"/><rect x="1145" y="541" width="6" height="8"/><circle cx="1138" cy="534" r="2.500"/></g>
        <g class="cy"><path d="M1212 553L1214 560 1221 556 1228 560 1230 553"/></g>
        <!-- columns -->
        <g class="colm"><rect x="814" y="490" width="6" height="6"/><rect x="911" y="490" width="6" height="6"/><rect x="1008" y="490" width="6" height="6"/><rect x="1104" y="490" width="6" height="6"/><rect x="1176" y="490" width="6" height="6"/><rect x="1248" y="490" width="6" height="6"/><rect x="1320" y="490" width="6" height="6"/><rect x="1416" y="490" width="6" height="6"/><rect x="814" y="565" width="6" height="6"/><rect x="911" y="565" width="6" height="6"/><rect x="1008" y="565" width="6" height="6"/><rect x="1104" y="565" width="6" height="6"/><rect x="1320" y="565" width="6" height="6"/><rect x="1416" y="565" width="6" height="6"/><rect x="814" y="612" width="6" height="6"/><rect x="911" y="612" width="6" height="6"/><rect x="1008" y="612" width="6" height="6"/><rect x="1104" y="612" width="6" height="6"/><rect x="1176" y="612" width="6" height="6"/><rect x="1320" y="612" width="6" height="6"/><rect x="1416" y="612" width="6" height="6"/><rect x="814" y="685" width="6" height="6"/><rect x="911" y="685" width="6" height="6"/><rect x="1008" y="685" width="6" height="6"/><rect x="1104" y="685" width="6" height="6"/><rect x="1176" y="685" width="6" height="6"/><rect x="1248" y="685" width="6" height="6"/><rect x="1320" y="685" width="6" height="6"/><rect x="1416" y="685" width="6" height="6"/></g>
        <g class="tbl"><use href="#tb" x="1250" y="579"/><use href="#tb" x="1295" y="579"/><use href="#tb" x="1206" y="622"/><use href="#tb" x="1250" y="622"/><use href="#tb" x="1295" y="622"/><use href="#tb" x="1206" y="663"/><use href="#tb" x="1251" y="663"/><use href="#tb" x="1295" y="663"/></g>
        <!-- bright dims -->
        <g class="gn">
          <path d="M814 430H1424M814 440H1424M1107 452H1323M818 422V470M914 422V470M1011 422V470M1107 422V470M1179 422V470M1251 422V470M1323 422V470M1419 422V470M814 426V470M1424 426V480"/>
          <path d="M866 435V445M962 435V445M1059 435V445M1110 448V456M1129 448V456M1163 448V456M1182 448V456M1195 448V456M1210 448V456M1226 448V456M1275 448V456M1300 448V456"/>
          <path d="M1107 466H1133V476M1186 468H1251M1251 458V480M823 464L830 463M821 480L832 467H848M842 467H848M1172 467H1188L1198 485M1152 467H1168L1178 480M1420 484L1431 467H1453"/>
          <path d="M818 594H1107M832 590V598M855 590V598M878 590V598M902 590V598M926 590V598M950 590V598M974 590V598M998 590V598M1022 590V598M1046 590V598M1070 590V598M1094 590V598"/>
          <path d="M1107 585H1179M1115 582V588M1127 582V588M1139 582V588M1151 582V588M1163 582V588M1175 582V588M1187 470V700"/>
          <path d="M1107 515H1180M1115 510V520M1128 510V520M1143 510V520M1160 510V520M1182 541H1320M1210 535V545M1230 535V545M1198 497V552M1248 497V552M1278 497V700M1348 497V640M1366 601V616M1355 605H1388M1388 605V616M1355 605V616"/>
          <path d="M1187 604H1321M1322 580H1420M1248 660V688M1183 607L1195 615 1206 616M1118 600L1140 615M1100 600H1118"/>
          <path d="M818 690V707M866 690V707M914 690V707M962 690V707M1011 690V707M1059 690V707M1107 690V707M1179 690V707M1251 690V707M1323 690V707M1419 690V707"/>
          <path d="M815 707H1420M1180 724H1420M818 733H1420M818 742H1420M820 728V738M835 728V738M851 728V738M867 728V738M883 728V738M899 728V738M915 728V738M931 728V738M947 728V738M963 728V738M979 728V738M995 728V738M1011 728V738M1027 728V738M1043 728V738M1059 728V738M1075 728V738M1091 728V738M1107 728V738M1123 728V738M1139 728V738M1160 728V738M1179 728V738M1210 728V738M1240 728V738M1285 728V738M1320 728V738M1350 728V738M1380 728V738M1400 728V738"/>
          <path d="M818 707V751M866 707V751M914 707V751M962 707V751M1011 707V751M1059 707V751M1107 707V751M1179 707V751M1251 707V751M1323 707V751M1419 707V751"/>
          <path d="M1115 690V700M1115 700H1143M1143 720H1182L1185 706M1182 700L1172 722H1150M1388 693L1402 716H1452M1440 690V702M1450 700V716"/>
          <path d="M1478 496V688M1490 496V688M1499 496V692M1460 490H1517M1467 688H1517M1467 692H1517M1472 525H1486M1472 547H1486M1472 568H1486M1472 589H1486M1472 610H1486M1472 632H1486M1472 654H1486"/>
          <path d="M748 490V690M758 490V690M778 525V690M735 688H788M735 692H787M792 496H735M772 523H790M790 523L782 518"/>
        </g>
        <g class="gn2">
          <path d="M1433 482V568"/>
          <path d="M1362 602L1368 608 1374 602z"/><path d="M766 515L772 520 778 515zM1035 568L1041 574 1047 568zM1071 472L1076 476 1081 472zM1117 632L1122 637 1127 632z"/>
        </g>
        <g class="dg"><path d="M815 751H1420M735 568H1180M1460 568H1513M1460 616H1513M735 616H800M735 496H800M1460 496H1513M1460 688H1513"/></g>
        <!-- axis bubbles -->
        <g class="gnc"><circle cx="818" cy="417" r="5"/><circle cx="914" cy="417" r="5"/><circle cx="1011" cy="417" r="5"/><circle cx="1107" cy="417" r="5"/><circle cx="1179" cy="417" r="5"/><circle cx="1251" cy="417" r="5"/><circle cx="1323" cy="417" r="5"/><circle cx="1419" cy="417" r="5"/>
          <circle cx="735" cy="496" r="5"/><circle cx="735" cy="568" r="5"/><circle cx="735" cy="616" r="5"/><circle cx="735" cy="688" r="5"/><circle cx="1513" cy="496" r="5"/><circle cx="1513" cy="568" r="5"/><circle cx="1513" cy="616" r="5"/><circle cx="1513" cy="688" r="5"/>
          <circle cx="818" cy="763" r="5"/><circle cx="914" cy="763" r="5"/><circle cx="1011" cy="763" r="5"/><circle cx="1107" cy="763" r="5"/><circle cx="1179" cy="763" r="5"/><circle cx="1251" cy="763" r="5"/><circle cx="1323" cy="763" r="5"/><circle cx="1419" cy="763" r="5"/></g>
        <g class="octs"><use href="#oct" x="752" y="496"/><use href="#oct" x="752" y="568"/><use href="#oct" x="752" y="616"/><use href="#oct" x="752" y="688"/><use href="#oct" x="818" y="754"/><use href="#oct" x="866" y="754"/><use href="#oct" x="914" y="754"/><use href="#oct" x="962" y="754"/><use href="#oct" x="1011" y="754"/><use href="#oct" x="1059" y="754"/><use href="#oct" x="1107" y="754"/><use href="#oct" x="1179" y="754"/><use href="#oct" x="1251" y="754"/><use href="#oct" x="1323" y="754"/><use href="#oct" x="1419" y="754"/></g>
        <g class="sect"><path d="M942 409V398H948M1283 409V398H1289M942 775V787H948M1283 775V787H1289M1113 807H1132"/></g>
        <g class="gnc"><circle cx="1456" cy="406" r="14.500"/><path d="M1456 392L1452 420H1459z"/></g>
        <!-- red selection -->
        <rect class="sel-box" x="961" y="548" width="51" height="35"/>
        <g class="cross"><path d="M808 677L828 699M828 677L808 699"/></g>
        <!-- big text -->
        <g class="big">
          <text x="752" y="503" text-anchor="middle">D</text><text x="752" y="575" text-anchor="middle">C</text><text x="752" y="623" text-anchor="middle">B</text><text x="752" y="695" text-anchor="middle">A</text>
          <text x="822" y="722" textLength="40" lengthAdjust="spacingAndGlyphs">4000</text><text x="870" y="722" textLength="40" lengthAdjust="spacingAndGlyphs">4000</text><text x="918" y="722" textLength="40" lengthAdjust="spacingAndGlyphs">4000</text><text x="966" y="722" textLength="40" lengthAdjust="spacingAndGlyphs">4000</text><text x="1015" y="722" textLength="40" lengthAdjust="spacingAndGlyphs">4000</text><text x="1063" y="722" textLength="40" lengthAdjust="spacingAndGlyphs">4000</text>
          <text x="1123" y="722" textLength="40" lengthAdjust="spacingAndGlyphs">6000</text><text x="1195" y="722" textLength="40" lengthAdjust="spacingAndGlyphs">6000</text><text x="1267" y="722" textLength="40" lengthAdjust="spacingAndGlyphs">6000</text><text x="1351" y="722" textLength="40" lengthAdjust="spacingAndGlyphs">8000</text>
          <text x="1094" y="741" textLength="50" lengthAdjust="spacingAndGlyphs">50000</text>
          <text x="818" y="761" text-anchor="middle">1</text><text x="866" y="761" text-anchor="middle">2</text><text x="914" y="761" text-anchor="middle">3</text><text x="962" y="761" text-anchor="middle">4</text><text x="1011" y="761" text-anchor="middle">5</text><text x="1059" y="761" text-anchor="middle">6</text><text x="1107" y="761" text-anchor="middle">7</text><text x="1179" y="761" text-anchor="middle">8</text><text x="1251" y="761" text-anchor="middle">9</text><text x="1323" y="761" text-anchor="middle">10</text><text x="1419" y="761" text-anchor="middle">11</text>
          <text class="rot-a" x="0" y="0" textLength="40" lengthAdjust="spacingAndGlyphs">6000</text>
          <text class="rot-b" x="0" y="0" textLength="50" lengthAdjust="spacingAndGlyphs">16000</text>
          <text class="rot-c" x="0" y="0" textLength="40" lengthAdjust="spacingAndGlyphs">4000</text>
          <text class="rot-d" x="0" y="0" textLength="40" lengthAdjust="spacingAndGlyphs">6000</text>
        </g>
        <!-- fine dims -->
        <g class="fine">
          <text x="839" y="439">400</text><text x="887" y="439">400</text><text x="935" y="439">400</text><text x="983" y="439">400</text><text x="1031" y="439">400</text><text x="1079" y="439">400</text><text x="1139" y="439">600</text><text x="1211" y="439">600</text><text x="1283" y="439">600</text><text x="1367" y="439">800</text>
          <text x="1114" y="429">5000</text><text x="805" y="438">250</text><text x="1430" y="438">250</text>
          <text x="1113" y="451">1500</text><text x="1149" y="451">1700</text><text x="1186" y="451">500</text><text x="1198" y="451">750</text><text x="1214" y="451">500</text><text x="1240" y="451">1700</text><text x="1259" y="451">1500</text><text x="1283" y="451">1700</text><text x="1307" y="451">1250</text>
          <text x="835" y="465">3.600</text><text x="1063" y="470">4.500</text><text x="1153" y="465">3.600</text><text x="1440" y="465">3.600</text>
          <text x="835" y="532">100</text><text x="860" y="522">100</text><text x="872" y="522">100</text><text x="908" y="522">100</text><text x="920" y="522">100</text><text x="956" y="522">100</text><text x="968" y="522">100</text><text x="1004" y="522">100</text><text x="1016" y="522">100</text><text x="1052" y="522">100</text><text x="1064" y="522">100</text>
          <text x="883" y="532">400</text><text x="931" y="532">400</text><text x="979" y="532">400</text><text x="1026" y="532">400</text><text x="1073" y="532">400</text>
          <text x="820" y="593">100</text><text x="838" y="593">100</text><text x="855" y="593">100</text><text x="870" y="593">100</text><text x="886" y="593">100</text><text x="904" y="593">100</text><text x="920" y="593">100</text><text x="934" y="593">100</text><text x="950" y="593">100</text><text x="966" y="593">100</text><text x="982" y="593">100</text><text x="998" y="593">100</text><text x="1014" y="593">100</text><text x="1030" y="593">100</text><text x="1046" y="593">100</text><text x="1062" y="593">100</text><text x="1078" y="593">100</text><text x="1094" y="593">100</text>
          <text x="1145" y="565">50</text><text x="1118" y="555">50</text><text x="1240" y="512">50</text><text x="1355" y="560">600</text><text x="1364" y="580">500</text><text x="1340" y="604">1950</text><text x="1267" y="538">7750</text><text x="1248" y="602">1500</text><text x="1290" y="599">4800</text>
          <text x="1110" y="516">1025</text><text x="1130" y="516">750</text><text x="1143" y="516">1275</text><text x="1160" y="516">750</text><text x="1190" y="540">1500</text><text x="1217" y="540">1500</text>
          <text x="1112" y="584">700</text><text x="1125" y="584">500</text><text x="1137" y="584">500</text><text x="1148" y="584">500</text><text x="1160" y="584">1000</text><text x="1172" y="584">500</text>
          <text x="836" y="732">1250</text><text x="850" y="732">1500</text><text x="865" y="732">1250</text><text x="881" y="732">1500</text><text x="899" y="732">1250</text><text x="915" y="732">1500</text><text x="931" y="732">1250</text><text x="948" y="732">1500</text><text x="964" y="732">1250</text><text x="980" y="732">1500</text><text x="996" y="732">1250</text><text x="1012" y="732">1500</text><text x="1028" y="732">1250</text><text x="1044" y="732">1500</text><text x="1060" y="732">1250</text><text x="1076" y="732">1500</text><text x="1154" y="732">1250</text><text x="1190" y="732">2250</text><text x="1220" y="732">1800</text><text x="1255" y="732">1250</text><text x="1285" y="732">1800</text><text x="1310" y="732">1250</text><text x="1330" y="732">1500</text><text x="1355" y="732">1250</text><text x="1380" y="732">1500</text>
          <text x="839" y="741">400</text><text x="887" y="741">400</text><text x="935" y="741">400</text><text x="983" y="741">400</text><text x="1031" y="741">400</text><text x="1079" y="741">400</text><text x="1211" y="741">600</text><text x="1283" y="741">600</text><text x="1367" y="741">800</text>
          <text x="1115" y="802">首层平面图</text><text x="1137" y="803">1:100</text><text x="1077" y="818">建筑面积846.67㎡/2172</text>
        </g>
        <!-- axis gizmo -->
        <g class="gz-g"><path d="M587 959V938"/><path class="gz-gf" d="M587 930l5 11h-10z"/></g>
        <g class="gz-r"><path d="M587 959H606"/><path class="gz-rf" d="M617 959l-12-5v10z"/></g>
        <circle class="gz-b" cx="587" cy="959" r="5"/>
        <text class="gz-ty" x="582" y="927">Y</text>
        <text class="gz-tx" x="619" y="965">X</text>
      </svg>
      <div class="vbar">
        <svg class="vb-first"><use href="#t-orb"/></svg>
        <svg><use href="#t-3d"/></svg>
        <svg><use href="#t-cube"/></svg>
        <span class="car vb-car"></span>
        <svg><use href="#t-cube2"/></svg>
        <span class="car vb-car"></span>
        <svg><use href="#t-frame"/></svg>
        <svg><use href="#t-box"/></svg>
        <span class="vb-line"></span>
        <svg><use href="#t-set"/></svg>
      </div>
    </section>

    <div class="handle"><span class="grip"></span></div>

    <aside class="disp">
      <div class="strip"><span class="strip-x"></span></div>
      <div class="ptitle">显示设置</div>
      <div class="dtabs"><span class="dtab dtab-on">图元显示</span><span class="dtab">楼层显示</span></div>
      <div class="dframe">
        <table class="tb layer">
          <colgroup><col class="lc1"><col class="lc2"><col class="lc2"></colgroup>
          <thead><tr><th>图层构件</th><th>显示图元</th><th>显示名称</th></tr></thead>
          <tbody>
            <tr><td class="l2">砌体墙</td><td class="ctr"><i class="cb on"></i></td><td class="ctr"><i class="cb"></i></td></tr>
            <tr><td class="l2">砌体加筋</td><td class="ctr"><i class="cb"></i></td><td class="ctr"><i class="cb"></i></td></tr>
            <tr><td class="l2">保温墙</td><td class="ctr"><i class="cb on"></i></td><td class="ctr"><i class="cb"></i></td></tr>
            <tr><td class="l2">暗梁</td><td class="ctr"><i class="cb"></i></td><td class="ctr"><i class="cb"></i></td></tr>
            <tr><td class="l2">墙垛</td><td class="ctr"><i class="cb"></i></td><td class="ctr"><i class="cb"></i></td></tr>
            <tr><td class="l2">幕墙</td><td class="ctr"><i class="cb on"></i></td><td class="ctr"><i class="cb"></i></td></tr>
            <tr><td class="l1"><span class="tog"></span>门窗洞</td><td class="ctr"><i class="cb part"></i></td><td class="ctr"><i class="cb"></i></td></tr>
            <tr><td class="l2">门</td><td class="ctr"><i class="cb on"></i></td><td class="ctr"><i class="cb"></i></td></tr>
            <tr><td class="l2">窗</td><td class="ctr"><i class="cb on"></i></td><td class="ctr"><i class="cb"></i></td></tr>
            <tr><td class="l2">门联窗</td><td class="ctr"><i class="cb on"></i></td><td class="ctr"><i class="cb"></i></td></tr>
            <tr><td class="l2">墙洞</td><td class="ctr"><i class="cb on"></i></td><td class="ctr"><i class="cb"></i></td></tr>
            <tr><td class="l2">带形窗</td><td class="ctr"><i class="cb on"></i></td><td class="ctr"><i class="cb"></i></td></tr>
            <tr><td class="l2">带形洞</td><td class="ctr"><i class="cb on"></i></td><td class="ctr"><i class="cb"></i></td></tr>
            <tr><td class="l2">飘窗</td><td class="ctr"><i class="cb"></i></td><td class="ctr"><i class="cb"></i></td></tr>
            <tr><td class="l2">老虎窗</td><td class="ctr"><i class="cb"></i></td><td class="ctr"><i class="cb"></i></td></tr>
            <tr><td class="l2">过梁</td><td class="ctr"><i class="cb on"></i></td><td class="ctr"><i class="cb"></i></td></tr>
            <tr><td class="l2">壁龛</td><td class="ctr"><i class="cb"></i></td><td class="ctr"><i class="cb"></i></td></tr>
            <tr><td class="l1"><span class="tog"></span>梁</td><td class="ctr"><i class="cb part"></i></td><td class="ctr"><i class="cb"></i></td></tr>
            <tr><td class="l2">梁</td><td class="ctr"><i class="cb"></i></td><td class="ctr"><i class="cb"></i></td></tr>
            <tr><td class="l2">连梁</td><td class="ctr"><i class="cb on"></i></td><td class="ctr"><i class="cb"></i></td></tr>
            <tr><td class="l2">圈梁</td><td class="ctr"><i class="cb"></i></td><td class="ctr"><i class="cb"></i></td></tr>
            <tr><td class="l1"><span class="tog"></span>板</td><td class="ctr"><i class="cb"></i></td><td class="ctr"><i class="cb"></i></td></tr>
            <tr><td class="l2">现浇板</td><td class="ctr"><i class="cb"></i></td><td class="ctr"><i class="cb"></i></td></tr>
            <tr><td class="l2">螺旋板</td><td class="ctr"><i class="cb"></i></td><td class="ctr"><i class="cb"></i></td></tr>
            <tr><td class="l2">坡道</td><td class="ctr"><i class="cb"></i></td><td class="ctr"><i class="cb"></i></td></tr>
            <tr><td class="l2">柱帽</td><td class="ctr"><i class="cb"></i></td><td class="ctr"><i class="cb"></i></td></tr>
            <tr><td class="l2">板洞</td><td class="ctr"><i class="cb"></i></td><td class="ctr"><i class="cb"></i></td></tr>
            <tr><td class="l2">板受力筋</td><td class="ctr"><i class="cb"></i></td><td class="ctr"><i class="cb"></i></td></tr>
            <tr><td class="l2">板负筋</td><td class="ctr"><i class="cb"></i></td><td class="ctr"><i class="cb"></i></td></tr>
            <tr><td class="l2">楼层板带</td><td class="ctr"><i class="cb"></i></td><td class="ctr"><i class="cb"></i></td></tr>
            <tr><td class="l2">板加腋</td><td class="ctr"><i class="cb"></i></td><td class="ctr"><i class="cb"></i></td></tr>
            <tr><td class="l1"><span class="tog"></span>空心楼盖</td><td class="ctr"><i class="cb"></i></td><td class="ctr"><i class="cb"></i></td></tr>
            <tr><td class="l2">空心楼盖板</td><td class="ctr"><i class="cb"></i></td><td class="ctr"><i class="cb"></i></td></tr>
            <tr><td class="l2">空心楼盖柱帽</td><td class="ctr"><i class="cb"></i></td><td class="ctr"><i class="cb"></i></td></tr>
          </tbody>
        </table>
        <div class="vscroll disp-thumb"></div>
      </div>
    </aside>
  </main>
</div>
</body>
</html>
```

FILE: styles.css
```css
*{box-sizing:border-box}
html,body{margin:0;padding:0;height:976px;overflow:hidden}
body{font:12px/1.2 "Noto Sans CJK SC","Noto Sans",sans-serif;color:#3a3a3a;background:#f1f1f1}
.defs{width:0;height:0;display:block;overflow:hidden}
.app{width:1920px;height:976px;display:flex;flex-direction:column}

/* shared svg strokes */
.d{fill:none;stroke:#55606e;stroke-width:1.1}
.b{fill:none;stroke:#2a7de1;stroke-width:1.1}
.g{fill:none;stroke:#c4c4c4;stroke-width:1.1}
.rs{fill:none;stroke:#d8352a;stroke-width:1.1}
.bf{fill:#2a7de1;stroke:none}
.rf{fill:#ef1c24;stroke:none}
.df{fill:#55606e;stroke:none}
.bfl{fill:#d6e7fb;stroke:#2a7de1;stroke-width:1.1}
.bfa{fill:#a9cdf6;stroke:none}
.lk{fill:#d9e8fa;stroke:#55606e;stroke-width:1.1}
.dash{stroke-dasharray:2 1.500}
.db{stroke:#2a7de1;stroke-dasharray:2 1.500}
.dl{fill:none;stroke:#4f5a6b;stroke-width:1.800}
.bl{fill:none;stroke:#2a7de1;stroke-width:1.800}
.dlc{fill:none;stroke:#4f5a6b;stroke-width:1.800}
.dlf{fill:#a9cdf6;stroke:#4f5a6b;stroke-width:1.200}

.car{display:inline-block;width:0;height:0;border-left:3px solid transparent;border-right:3px solid transparent;border-top:3px solid #777;margin-left:6px}

/* header */
.head{display:flex;height:41px;background:#fff}
.logo{width:49px;flex:none;display:flex;padding:4px 0 0 9px}
.logo-t{width:29px;height:28px;flex:none}
.logo-p{fill:url(#tg)}
.logo-c{width:0;height:0;margin:27px 0 0 0;border-left:4px solid transparent;border-bottom:4px solid #777}
.head-main{flex:1;display:flex;flex-direction:column;min-width:0}
.quick{display:flex;height:22px;align-items:flex-start}
.q-icons{width:710px;flex:none;display:flex;align-items:center;padding:2px 0 0 6px;height:20px}
.qi{width:16px;height:16px;margin-right:10.500px;flex:none}
.q-car{margin:0 9px 0 -6px;border-top-color:#666}
.q-more{width:6px;height:6px;border-top:1px solid #666;border-bottom:3px solid #666;margin-left:2px}
.app-title{font-size:12px;line-height:16px;margin-top:2px;color:#333;white-space:nowrap}
.win{margin-left:auto;display:flex;align-items:center;height:20px;padding-right:11px}
.w-min{width:6px;height:2px;background:#666;margin-right:29px;margin-top:5px}
.w-ic{width:10px;height:10px;margin-left:0;margin-right:27px}
.w-ic+.w-ic{margin-right:0}
.tabsrow{display:flex;height:19px;align-items:center}
.tabs{display:flex;width:1372px;flex:none}
.tab{padding:0 13px;line-height:19px;height:19px;color:#3a3a3a;border-radius:10px;white-space:nowrap}
.tab-on{background:#2d8cf0;color:#fff}
.search{width:319px;height:17px;flex:none;background:#fff;border:1px solid #e3e3e3;border-radius:2px;display:flex;align-items:center;padding:0 4px;justify-content:space-between;color:#222;line-height:15px}
.search-ic{width:11px;height:11px}
.user{display:flex;align-items:center;margin-left:7px;width:72px;flex:none;color:#555}
.avatar{width:16px;height:16px;flex:none}
.av-b{fill:#9cc9f4}
.av-w{fill:#fff}
.head-tools{display:flex;align-items:center;margin-left:9px}
.ht{width:15px;height:15px;flex:none}
.help{font-size:15px;line-height:15px;margin-left:9px;color:#555}
.help-car{margin:0 9px 0 2px}
.ht:last-child{margin-left:9px}

/* ribbon */
.ribbon{display:flex;height:99px;background:#fff;border-bottom:2px solid #dedede;padding-top:1px}
.grp{height:92px;display:flex;flex-direction:column;border-right:1px solid #d8d8d8;flex:none}
.g1{width:233px}
.g2{width:193px}
.g3{width:276px}
.g4{width:238px}
.g5{width:66px}
.g6{width:210px}
.g7{width:142px}
.g8{width:90px}
.rb{flex:1;display:flex;padding-top:2px;min-height:0}
.g1 .rb{padding-left:8px}
.g2 .rb{padding-left:8px}
.g3 .rb{padding-left:9px}
.g4 .rb{padding-left:9px}
.g5 .rb{padding-left:15px}
.g6 .rb{padding-left:6px}
.g7 .rb{padding-left:0}
.g8 .rb{padding-left:10px}
.glabel{height:17px;line-height:17px;text-align:center;color:#444}
.col{display:flex;flex-direction:column;flex:none}
.c-98{width:98px}
.c-79{width:79px}
.c-67{width:67px}
.c-111{width:111px}
.c-54{width:54px}
.c-55{width:55px}
.c-62{width:62px}
.c-32{width:32px}
.it{height:22.500px;display:flex;align-items:center;white-space:nowrap;color:#3a3a3a}
.it svg{width:15px;height:15px;margin-right:4px;flex:none}
.it .car{margin-left:6px}
.it .car-n{margin-left:-2px}
.dis{color:#bdbdbd}
.dis .car{border-top-color:#ccc}
.sel-big{width:40px;height:67px;flex:none;margin-right:5px;margin-top:2px;background:#c5daf2;border-radius:3px;display:flex;flex-direction:column;align-items:center;color:#333}
.sel-ar{width:22px;height:28px;margin:3px 0 9px}
.sel-p{fill:none;stroke:#2a7de1;stroke-width:2.200}
.lg{display:flex;flex-direction:column;align-items:center;flex:none;white-space:nowrap}
.lg svg{width:30px;height:32px;margin:2px 0 7px}
.w-70{width:70px}
.w-60{width:60px}
.w-61{width:61px}
.lg-car{margin:6px 0 0}

/* dropdown bar */
.ddbar{height:26px;display:flex;gap:5px;padding:1px 0 0 3px;background:#f1f1f1}
.dd{width:97px;height:23px;background:#fff;border:1px solid #e6e6e6;border-radius:2px;display:flex;align-items:center;justify-content:space-between;padding:0 7px 0 3px;color:#3a3a3a;line-height:21px}
.dd .car{border-top-color:#555;border-left-width:2.500px;border-right-width:2.500px}

/* work area */
.work{flex:1;display:flex;min-height:0;overflow:hidden}
.strip{height:12px;background:#e6e6e6;border:1px solid #dcdcdc;border-width:1px 0;display:flex;justify-content:flex-end;align-items:center;padding-right:4px;flex:none}
.strip-x{width:8px;height:8px;background:linear-gradient(45deg,transparent 44%,#aaa 44%,#aaa 56%,transparent 56%),linear-gradient(-45deg,transparent 44%,#aaa 44%,#aaa 56%,transparent 56%)}
.ptitle{height:22px;line-height:22px;padding-left:9px;background:#f1f1f1;border-bottom:1px solid #ddd;color:#8a8a8a;flex:none}
.nav{width:210px;flex:none;background:#fff;margin-right:5px;display:flex;flex-direction:column;border-right:1px solid #e4e4e4}
.nav-tools{height:28px;display:flex;align-items:center;padding-left:8px;gap:4px;flex:none;border-bottom:1px solid #e6e6e6}
.nt{width:16px;height:16px;display:block}
.nt-on{width:24px;height:22px;border-radius:3px;background:#c6def8;display:flex;align-items:center;justify-content:center}
.nt-on:first-of-type{margin-left:2px}
.nav-body{display:flex;padding:4px 0 0 1px;flex:1;min-height:0}
.nav-list{width:194px;flex:none}
.sec{height:25px;line-height:25px;margin-bottom:3px;background:#ececec;padding-left:3px;display:flex;align-items:center;color:#444}
.sec-lk{width:11px;height:12px;margin-left:3px}
.badge{margin-left:auto;width:53px;height:18px;border-radius:9px 0 0 9px;background:linear-gradient(90deg,#f8ddb0,#f0c46e);color:#a06a12;line-height:18px;padding-left:8px;white-space:nowrap;font-size:11px}
.ni{height:25px;margin-bottom:3px;display:flex;align-items:center;padding-left:17px;color:#444;white-space:nowrap}
.ni svg{width:18px;height:18px;margin-right:14px;flex:none}
.ni-on{background:#d0e5fd}
.vscroll{background:#cbcbcb;border-radius:4px;width:7px;flex:none}
.nav-thumb{height:594px;margin:12px 0 0 4px}

.mid{width:318px;flex:none;display:flex;flex-direction:column}
.mid-top{height:447px;background:#fff;border:1px solid #e4e4e4;border-width:0 1px 1px 1px;display:flex;flex-direction:column;flex:none}
.mid-bot{flex:1;background:#fff;margin-top:5px;border:1px solid #e4e4e4;border-width:0 1px;display:flex;flex-direction:column;min-height:0;overflow:hidden}
.ptabs{height:23px;background:#f1f1f1;display:flex;border-bottom:1px solid #ddd;flex:none}
.ptabs-b{height:22px}
.ptab{width:65px;height:22px;line-height:21px;text-align:center;background:#e0e0e0;border:1px solid #d2d2d2;color:#8a8a8a}
.ptab-on{background:#f1f1f1;color:#333}
.mtools{height:27px;display:flex;align-items:center;padding-left:3px;flex:none}
.mtools svg{width:16px;height:16px;margin-right:5px;flex:none}
.mtools .m-gap{margin-left:10px}
.mtools .m-gap2{margin-left:13px;margin-right:3px}
.mtools .car{margin-left:5px}
.tb{border-collapse:collapse;table-layout:fixed}
.tb th{font-weight:400;height:21px;border:1px solid #ddd;padding:0;text-align:center;color:#3a3a3a}
.tb td{height:21px;border:1px solid #ddd;padding:0 0 0 3px;white-space:nowrap;overflow:hidden;color:#3a3a3a}
.draw{width:314px;margin-left:-1px}
.draw th{height:25px}
.dc1{width:171px}
.dc2{width:36px}
.dc3{width:61px}
.dc4{width:46px}
.th-blue{background:#7ab8fa;color:#fff !important;font-weight:700 !important;border:1px solid #5ea6f2 !important}
.ctr{text-align:center;padding:0 !important}
.lk16{width:16px;height:16px;vertical-align:middle;display:inline-block}
.tog{display:inline-block;width:13px;height:13px;border:1px solid #8a8a8a;border-radius:2px;margin-right:5px;vertical-align:-2px;background:linear-gradient(#666,#666) center/5px 1px no-repeat}
.tog-p{background:linear-gradient(#666,#666) center/5px 1px no-repeat,linear-gradient(#666,#666) center/1px 5px no-repeat}
.grp-td{padding-left:2px !important}
.leaf{padding-left:29px !important;background:linear-gradient(#dcdcdc,#dcdcdc) 8px 0/1px 50% no-repeat,linear-gradient(#dcdcdc,#dcdcdc) 8px 50%/17px 1px no-repeat}
.row-on td{background-color:#d4e8fd}
.cell-on{outline:2px solid #808080;outline-offset:-2px}
.prop{width:316px;margin-left:-1px}
.prop th{height:22px}
.pc1{width:22px}
.pc2{width:101px}
.pc3{width:152px}
.pc4{width:41px}
.idx{text-align:center;padding:0 !important;background:#f6f6f6}
.bl{color:#2e66dd !important}
.gray{color:#a8a8a8 !important}
.cb{display:inline-flex;width:14px;height:14px;border:1px solid #8a8a8a;border-radius:2px;vertical-align:middle;background:#fff;align-items:center;justify-content:center}
.on{background:#2f7fe8;border-color:#2f7fe8}
.on::after{content:"";width:4px;height:8px;border:solid #fff;border-width:0 2px 2px 0;transform:rotate(45deg) translate(-1px,-1px)}
.part::after{content:"";width:10px;height:10px;background:#8fc0fb}

.handle{width:4px;flex:none;display:flex;align-items:flex-start;background:#f1f1f1}
.grip{width:4px;height:100px;background:#6c7278;margin-top:372px}
.canvas{width:1099px;flex:none;background:#000;position:relative;overflow:hidden}
.cad{display:block;width:1099px;height:810px}
.vbar{position:absolute;top:0;right:0;width:33px;height:245px;background:#fff;border-radius:0 0 0 3px;display:flex;flex-direction:column;align-items:center;padding-top:14px}
.vbar svg{width:21px;height:20px;margin-bottom:9px;flex:none}
.vbar .vb-first{margin-bottom:8px}
.vb-car{margin:0 0 6px;border-left-width:4px;border-right-width:4px;border-top-width:4px;border-top-color:#555;flex:none}
.vb-line{width:21px;height:1px;background:#888;margin:-2px 0 6px;flex:none}

.disp{flex:1;min-width:0;background:#fff;display:flex;flex-direction:column;border-left:1px solid #ddd;padding-bottom:8px}
.dtabs{height:26px;display:flex;gap:4px;padding:4px 0 0 4px;background:#fff;flex:none}
.dtab{width:60px;height:22px;line-height:21px;text-align:center;background:#dcdcdc;border-radius:3px 3px 0 0;color:#666}
.dtab-on{background:#fff;border:1px solid #ddd;border-bottom:0;color:#2a7de1}
.dframe{margin:3px 2px 0 2px;border:1px solid #ddd;display:flex;flex:1;min-height:0;overflow:hidden}
.layer{width:258px;flex:none;align-self:flex-start;margin:-1px 0 0 -1px}
.lc1{width:132px}
.lc2{width:63px}
.l2{padding-left:40px !important;background:linear-gradient(#dcdcdc,#dcdcdc) 9px 0/1px 100% no-repeat,linear-gradient(#dcdcdc,#dcdcdc) 18px 0/1px 100% no-repeat,linear-gradient(#dcdcdc,#dcdcdc) 18px 50%/16px 1px no-repeat}
.l1{padding-left:12px !important;background:linear-gradient(#dcdcdc,#dcdcdc) 9px 0/1px 100% no-repeat}
.disp-thumb{height:212px;margin:89px 0 0 4px}

/* CAD */
.ol path{fill:none;stroke:#808000;stroke-width:2}
.yl path{fill:none;stroke:#e0e000;stroke-width:1}
.dr path{fill:none;stroke:#a00000;stroke-width:1}
.wall path{fill:none;stroke:#8f8f8f;stroke-width:3}
.org path{fill:none;stroke:#ff5a30;stroke-width:1.500}
.pur path{fill:none;stroke:#7a0090;stroke-width:3.500}
.ywall path{fill:none;stroke:#ffff30;stroke-width:2}
.mg path{fill:none;stroke:#ff00ff;stroke-width:1}
.wh1 path{fill:none;stroke:#fff;stroke-width:1}
.mgt *{fill:none;stroke:#ff00ff;stroke-width:1}
.cy path{fill:none;stroke:#00d0ff;stroke-width:1}
.colm rect{fill:none;stroke:#9a9a9a;stroke-width:1}
.tbl *{fill:none;stroke:#b0b0b0;stroke-width:1}
.gn path{fill:none;stroke:#00e000;stroke-width:1}
.gn2 path{fill:none;stroke:#00e000;stroke-width:1}
.dg path{fill:none;stroke:#008000;stroke-width:1.500}
.gnc circle{fill:none;stroke:#00e000;stroke-width:1}
.gnc path{fill:none;stroke:#00e000;stroke-width:1}
.octs *{fill:none;stroke:#00a000;stroke-width:1}
.sect path{fill:none;stroke:#00a000;stroke-width:1.200}
.sel-box{fill:none;stroke:#f02010;stroke-width:2.500}
.cross path{fill:none;stroke:#fff;stroke-width:1.500}
.big text{font:400 19px "Liberation Sans Narrow","Liberation Sans",sans-serif;fill:#ddd}
.rot-a{transform:translate(798px,552px) rotate(-90deg)}
.rot-b{transform:translate(780px,615px) rotate(-90deg)}
.rot-c{transform:translate(798px,612px) rotate(-90deg)}
.rot-d{transform:translate(798px,672px) rotate(-90deg)}
.fine text{font:700 4.500px "Liberation Sans","Noto Sans CJK SC",sans-serif;fill:#e8e8e8}
.gz-g path{fill:none;stroke:#00f000;stroke-width:4}
.gz-g .gz-gf{fill:#00f000;stroke:none}
.gz-r path{fill:none;stroke:#f00000;stroke-width:4}
.gz-r .gz-rf{fill:#f00000;stroke:none}
.gz-b{fill:#0000b0}
.gz-ty{font:11px "Liberation Sans",sans-serif;fill:#00d000}
.gz-tx{font:13px "Liberation Sans",sans-serif;fill:#f00000}
```
